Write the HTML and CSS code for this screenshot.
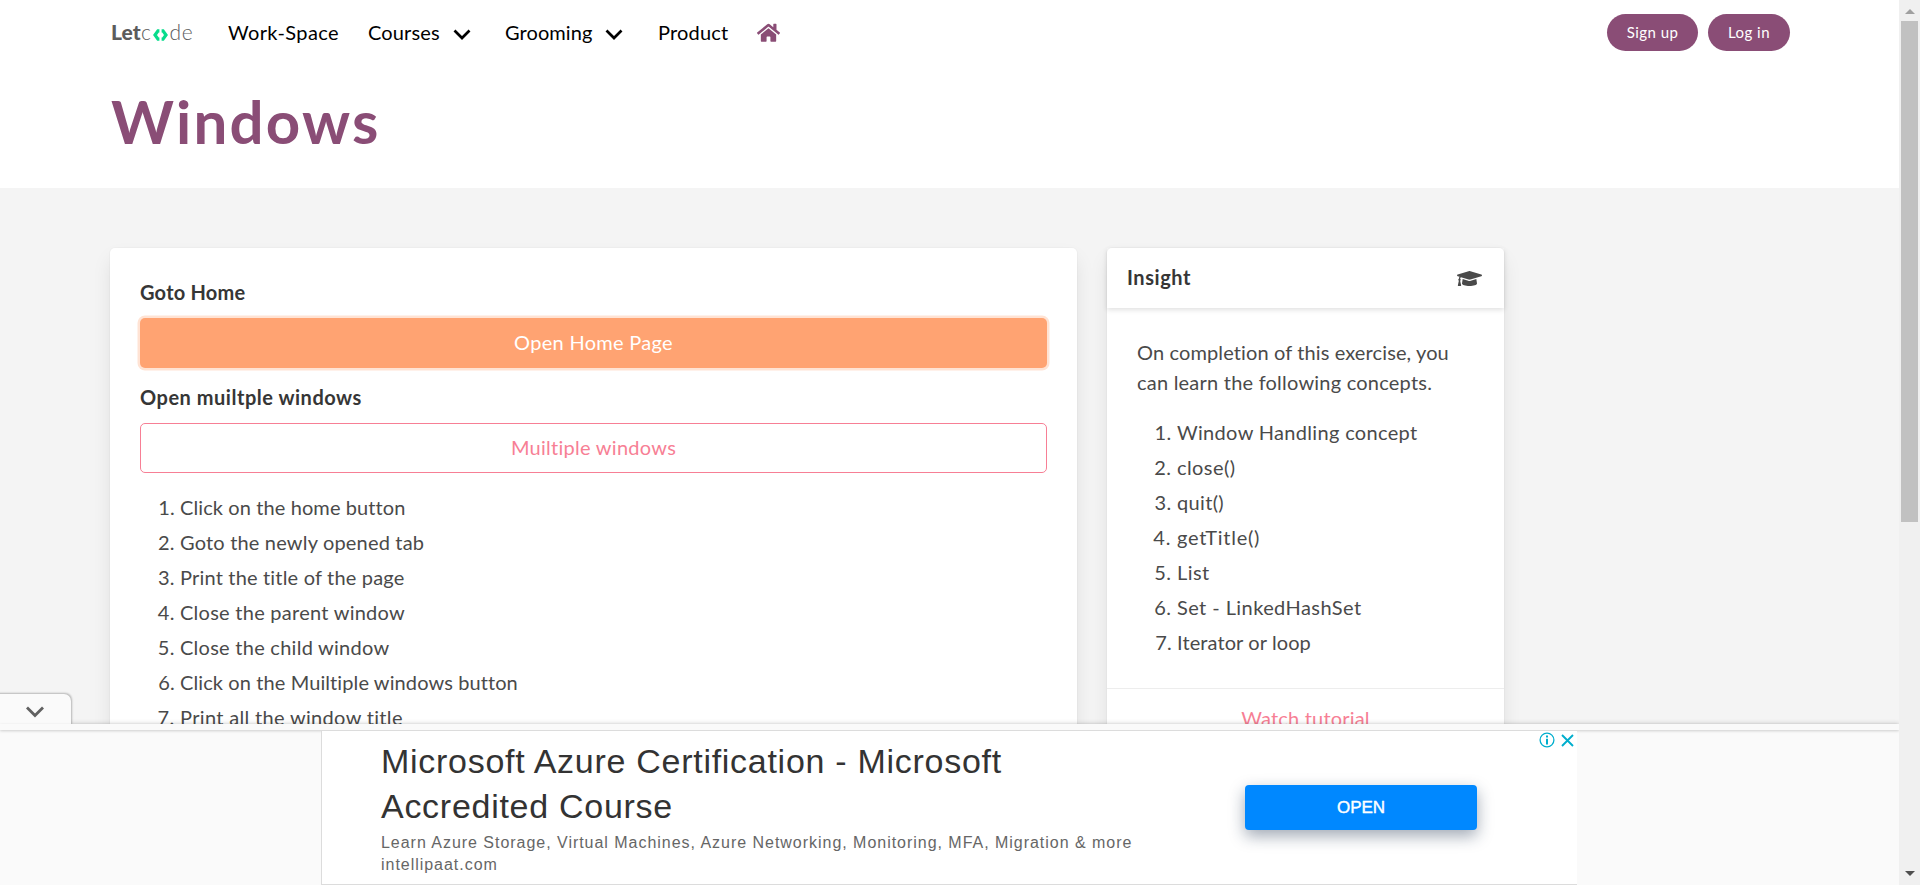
FILE: index.html
```html
<!DOCTYPE html>
<html lang="en">
<head>
<meta charset="utf-8">
<title>LetCode - Windows</title>
<link rel="stylesheet" href="styles.css">
</head>
<body>
<div class="page">
  <header class="hero">
    <nav class="navbar">
      <a class="brand" aria-label="Letcode"><b>Let</b><span>c</span><svg class="brand-mark" viewBox="0 0 15 12"><path d="M6.400 1.800H5L2 6l3 4.200h1.400M8.600 1.800H10L13 6l-3 4.200H8.600" fill="none" stroke="#07dc8c" stroke-width="3.200"/></svg><span>de</span></a>
      <a class="nav-item work">Work-Space</a>
      <a class="nav-item courses">Courses<svg class="chev" viewBox="0 0 18 11"><path d="M1.5 1.5 9 9l7.500-7.500" fill="none" stroke="#000" stroke-width="2.700"/></svg></a>
      <a class="nav-item grooming">Grooming<svg class="chev" viewBox="0 0 18 11"><path d="M1.5 1.5 9 9l7.500-7.500" fill="none" stroke="#000" stroke-width="2.700"/></svg></a>
      <a class="nav-item product">Product</a>
      <svg class="home" viewBox="0 0 576 448"><path fill="#8a4d76" d="M280.400 84.300 96 236.100V400a16 16 0 0 0 16 16l112-.3a16 16 0 0 0 16-16V304a16 16 0 0 1 16-16h64a16 16 0 0 1 16 16v95.600a16 16 0 0 0 16 16l112 .4a16 16 0 0 0 16-16V236L295.700 84.300a12.200 12.200 0 0 0-15.300 0zM571.600 187.500 488 118.600V-20a12 12 0 0 0-12-12h-56a12 12 0 0 0-12 12v72.600L318.500-21a48 48 0 0 0-61 0L4.300 187.500a12 12 0 0 0-1.600 16.900l25.500 31a12 12 0 0 0 16.900 1.600L280.400 43.200a12.200 12.200 0 0 1 15.300 0L530.900 237a12 12 0 0 0 16.900-1.600l25.500-31a12 12 0 0 0-1.700-16.900z"/></svg>
      <div class="auth"><a class="pill signup">Sign up</a><a class="pill login">Log in</a></div>
    </nav>
    <h1 class="title">Windows</h1>
  </header>
  <main class="section">
    <section class="card main-card">
      <div class="label">Goto Home</div>
      <button class="btn primary">Open Home Page</button>
      <div class="label multi">Open muiltple windows</div>
      <button class="btn outlined">Muiltiple windows</button>
      <ol class="steps">
        <li class="ls1">Click on the home button</li>
        <li>Goto the newly opened tab</li>
        <li>Print the title of the page</li>
        <li class="ls2">Close the parent window</li>
        <li class="ls2">Close the child window</li>
        <li class="ls1">Click on the Muiltiple windows button</li>
        <li class="ls3">Print all the window title</li>
      </ol>
    </section>
    <aside class="card side-card">
      <div class="card-head"><span>Insight</span>
        <svg class="cap" viewBox="0 0 640 384"><path fill="#4a4a4a" d="M622.300 89.100 343.500 3.500a80 80 0 0 0-47 0L17.700 89.100c-23.600 7.300-23.600 38.500 0 45.700l48.600 15c-10.700 13.200-17.200 29.300-17.800 46.900A31.900 31.900 0 0 0 32 224c0 11.600 6.300 21.300 15.500 26.900L22 365.500c-2.200 10 5.400 19.500 15.600 19.500h52.800c10.200 0 17.800-9.500 15.600-19.500L80.500 250.900C89.700 245.300 96 235.600 96 224c0-11.300-6-21-14.900-26.600.8-15 8.400-28.300 20.700-36.700l194.600 59.800c14 4.300 30.100 5.200 47 0l278.800-85.600c23.700-7.200 23.700-38.400.1-45.800zM353 251.100c-29.200 9-52.900 4.200-66 0L145 207.400 128 320c0 35.300 86 64 192 64s192-28.700 192-64l-17-112.600z"/></svg>
      </div>
      <div class="card-content">
        <p>On completion of this exercise, you<br><span class="learn">can learn the following concepts.</span></p>
        <ol class="concepts">
          <li class="ls3">Window Handling concept</li>
          <li class="ls4">close()</li>
          <li class="ls3">quit()</li>
          <li class="ls7">getTitle()</li>
          <li class="ls4">List</li>
          <li class="ls4">Set - LinkedHashSet</li>
          <li class="ls1">Iterator or loop</li>
        </ol>
      </div>
      <div class="card-foot">Watch tutorial</div>
    </aside>
  </main>
  <div class="ad-bar">
    <div class="ad-tab"><svg viewBox="0 0 20 12"><path d="m2 1.500 8 8 8-8" fill="none" stroke="#616161" stroke-width="2.800"/></svg></div>
    <div class="ad-strip"></div>
    <div class="ad-frame">
      <div class="ad-copy">
        <div class="ad-title">Microsoft Azure Certification - Microsoft<br>Accredited Course</div>
        <div class="ad-text">Learn Azure Storage, Virtual Machines, Azure Networking, Monitoring, MFA, Migration &amp; more<br>intellipaat.com</div>
      </div>
      <button class="ad-open">OPEN</button>
      <div class="ad-icons">
        <svg width="16" height="16" viewBox="0 0 16 16"><circle cx="8" cy="8" r="6.900" fill="none" stroke="#00aecd" stroke-width="1.300"/><path d="M8 3.600v2M8 6.800v5.600" stroke="#00aecd" stroke-width="2"/></svg>
        <svg width="13" height="13" viewBox="0 0 13 13"><path d="m1 1 11 11M12 1 1 12" stroke="#00aecd" stroke-width="1.900"/></svg>
      </div>
    </div>
  </div>
</div>
<div class="scrollbar"><i class="arrow up"></i><div class="thumb"></div><i class="arrow down"></i></div>
</body>
</html>
```
FILE: styles.css
```css
* { box-sizing: border-box; }
body {
  margin: 0; width: 1920px; height: 885px; overflow: hidden; display: flex;
  font: 400 20px/30px Lato, "Open Sans", sans-serif; letter-spacing: .18px; color: #4a4a4a;
}
svg { display: block; flex: none; }
button { font: inherit; letter-spacing: inherit; padding: 0 0 2px; }
.page { position: relative; width: 1899px; height: 885px; overflow: hidden; background: #f4f4f4; }

.hero { height: 188px; background: #fff; padding: 0 110px; }
.navbar { display: flex; align-items: center; height: 64px; color: #000; }
.brand {
  display: flex; align-items: baseline; width: 118px; padding-left: 1px;
  font: 300 21px/24px Lato, sans-serif; letter-spacing: .7px; color: #5c5c5c;
}
.brand b { font-weight: 900; letter-spacing: .1px; }
.brand-mark { width: 15px; height: 12px; margin: 0 2px 0 1px; align-self: center; position: relative; top: 3px; }
.nav-item { display: flex; align-items: center; }
.work { width: 140px; letter-spacing: .39px; }
.courses { width: 137px; letter-spacing: .15px; }
.grooming { width: 153px; letter-spacing: .08px; }
.product { width: 99px; }
.chev { width: 18px; height: 11px; margin: 5px 0 0 13px; }
.home { width: 23px; height: 18px; overflow: visible; margin-top: 4px; }
.auth { display: flex; gap: 10px; margin: 1px -1px 0 auto; }
.pill {
  height: 37px; border-radius: 19px; background: #8a4d76; color: #fff;
  font-size: 15px; line-height: 36px; text-align: center; letter-spacing: .46px;
}
.signup { width: 91px; }
.login { width: 82px; }
.title {
  margin: 20px 0 0; padding-left: 1px; font-size: 60px; line-height: 75px;
  font-weight: 700; letter-spacing: 2.230px; color: #8a4d76;
}

.section { display: flex; align-items: flex-start; gap: 30px; padding: 60px 110px 0; }
.card { background: #fff; border-radius: 5px; box-shadow: 0 10px 20px -2px rgba(10,10,10,.1), 0 0 0 1px rgba(10,10,10,.02); }
.main-card { width: 967px; height: 640px; padding: 29px 30px 30px; }
.label { font-weight: 700; color: #363636; line-height: 30px; margin-bottom: 11px; letter-spacing: .22px; }
.multi { letter-spacing: .52px; margin-top: 14px; }
.btn { display: block; width: 100%; height: 50px; border-radius: 5px; }
.primary { border: 0; background: #ffa372; color: #fff; box-shadow: 0 0 0 2.500px rgba(255,163,114,.3); letter-spacing: .3px; }
.outlined { background: #fff; border: 1px solid #f77f95; color: #f77f95; letter-spacing: .27px; }
.steps, .concepts { margin: 0; padding: 0 0 0 40px; }
.steps { margin-top: 19px; }
li { height: 30px; margin-bottom: 5px; }
.ls1 { letter-spacing: .1px; }
.ls2 { letter-spacing: .26px; }
.ls3 { letter-spacing: .33px; }
.ls4 { letter-spacing: .42px; }
.ls7 { letter-spacing: .73px; }

.side-card { width: 397px; height: 640px; }
.card-head {
  display: flex; justify-content: space-between; align-items: center; height: 60px; padding: 0 22px 2px 20px;
  box-shadow: 0 2px 5px rgba(10,10,10,.12); font-weight: 700; color: #363636; letter-spacing: .56px;
}
.cap { width: 25px; height: 15px; margin-top: 2px; }
.card-content { height: 380px; padding: 29px 30px 30px; }
.card-content p { margin: 0 0 20px; letter-spacing: .12px; white-space: nowrap; }
.learn { letter-spacing: .22px; }
.card-foot { border-top: 1px solid #ededed; padding-top: 14px; text-align: center; color: #f77f95; }

/* Anchored ad laid over the bottom of the page */
.ad-bar { position: absolute; left: 0; right: 0; bottom: 0; height: 161px; background: #fafafa; box-shadow: 0 0 5px rgba(0,0,0,.2); }
.ad-strip { position: relative; height: 6px; background: #fafafa; box-shadow: 0 1px 3px rgba(0,0,0,.18); }
.ad-tab {
  position: absolute; left: -8px; top: -30px; width: 79px; height: 31px; padding: 12px 0 0 33px;
  background: #fafafa; border-radius: 0 7px 0 0; box-shadow: 1px -1px 2px rgba(0,0,0,.25); clip-path: inset(-6px -6px 0 0);
}
.ad-tab svg { width: 20px; height: 12px; }
.ad-frame {
  position: relative; width: 1256px; height: 155px; margin-left: 321px; padding: 9px 0 0 59px; display: flex;
  background: #fff; border: 1px solid #dcdcdc; border-right: 0;
  font-family: "Liberation Sans", Arial, sans-serif;
}
.ad-copy { width: 864px; white-space: nowrap; }
.ad-title { font-size: 34px; line-height: 45px; color: #333; letter-spacing: .72px; margin-top: -1px; }
.ad-text { font-size: 16px; line-height: 22px; color: #666; letter-spacing: .97px; margin-top: 3px; }
.ad-open {
  width: 232px; height: 45px; margin-top: 45px; padding: 0; border: 0; border-radius: 4px; background: #08f; color: #fff;
  font-size: 17px; letter-spacing: 0; -webkit-text-stroke: .4px #fff; box-shadow: 0 6px 16px rgba(20,40,70,.4);
}
.ad-icons { position: absolute; right: 3px; top: 1px; display: flex; align-items: center; gap: 6px; }

.scrollbar { width: 21px; height: 885px; background: #f0f0f0; display: flex; flex-direction: column; align-items: center; }
.arrow { border: 5px solid transparent; border-top: 0; border-bottom: 5px solid #a0a0a0; width: 0; height: 0; }
.up { margin: 9px 0 7px; }
.thumb { width: 17px; height: 501px; background: #c1c1c1; }
.down { margin-top: auto; margin-bottom: 9px; border-top: 5px solid #4f4f4f; border-bottom: 0; }
```
